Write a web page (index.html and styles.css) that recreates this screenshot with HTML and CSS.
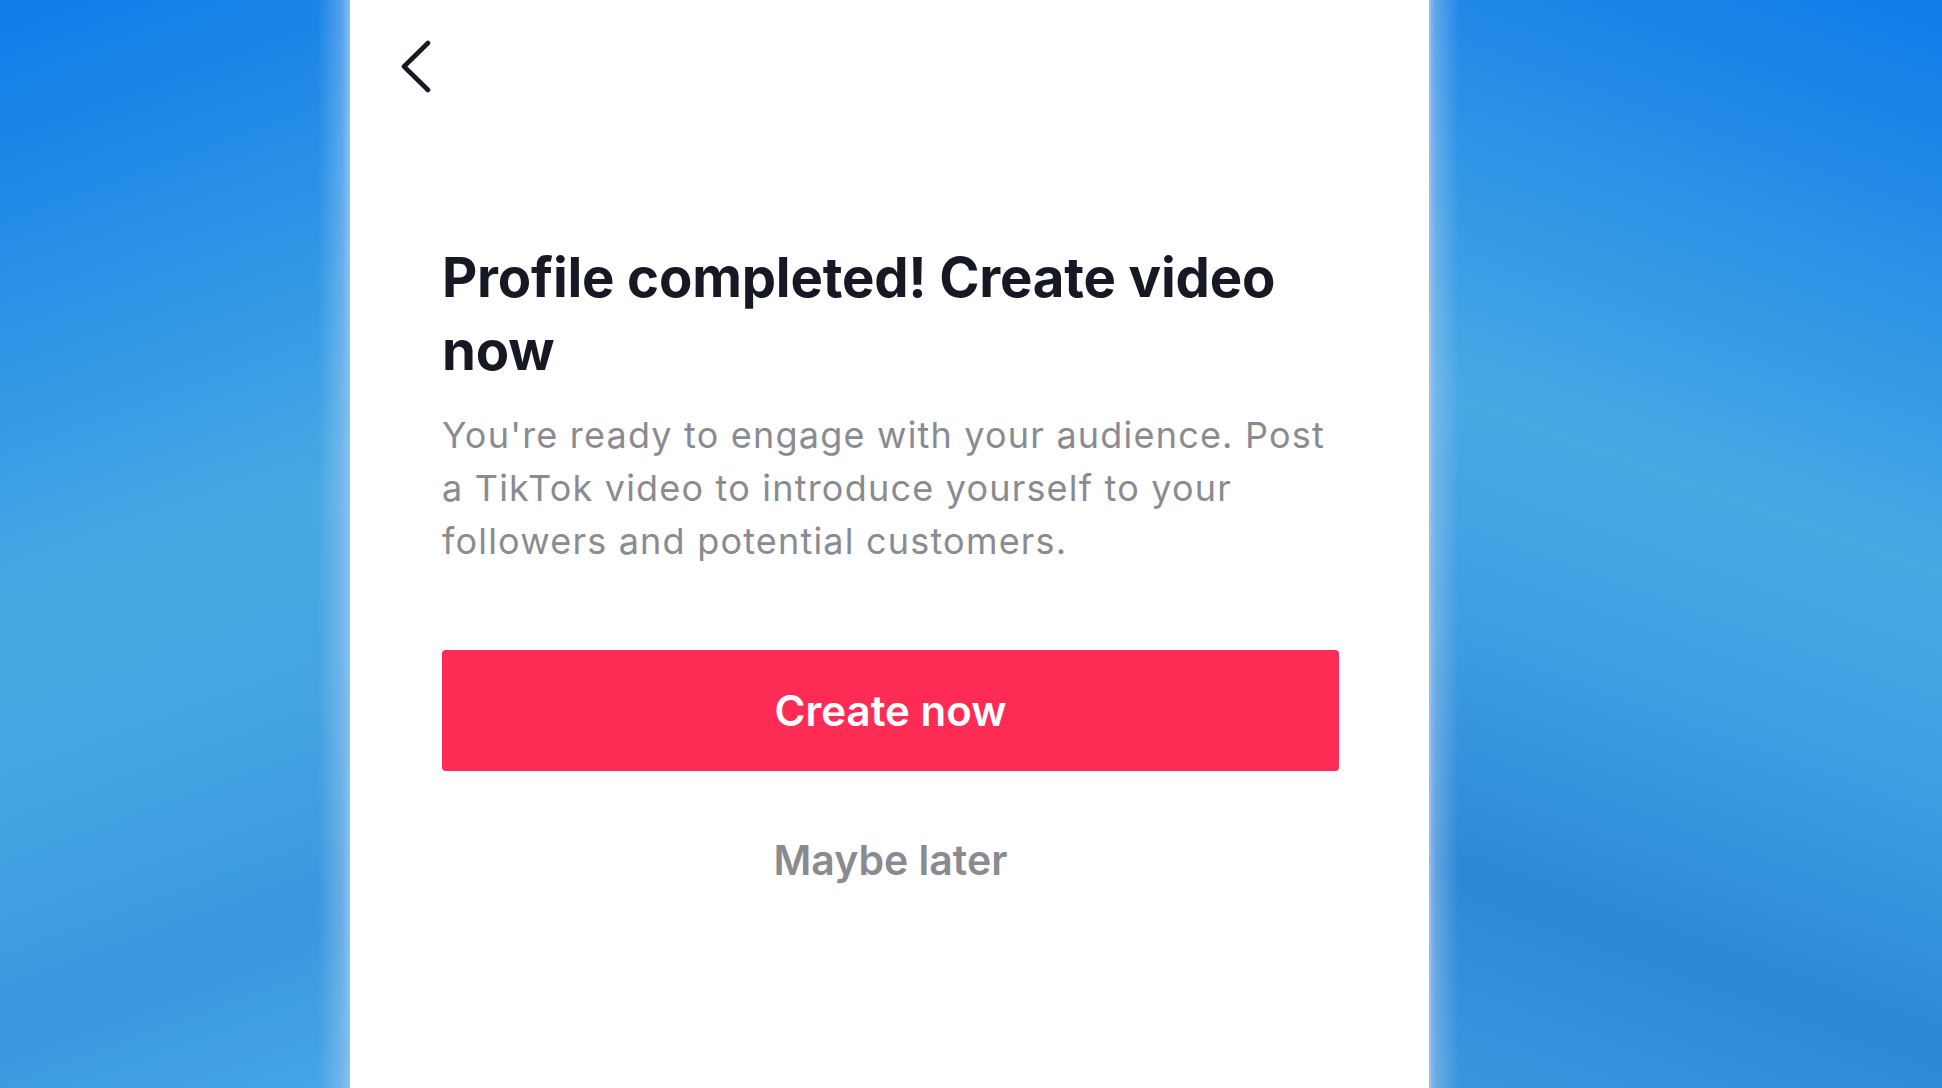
FILE: index.html
```html
<!DOCTYPE html>
<html lang="en">
<head>
<meta charset="utf-8">
<title>Profile completed</title>
<link rel="stylesheet" href="styles.css">
</head>
<body>
<div class="stage">
  <div class="backdrop backdrop-left"></div>
  <main class="panel">
    <div class="topbar">
      <button class="back" aria-label="Back">
        <svg viewBox="0 0 32 54" width="32" height="54" aria-hidden="true">
          <polyline points="27,3 3,26.5 27,50" fill="none" stroke="#161823" stroke-width="4.6" stroke-linecap="round" stroke-linejoin="round"/>
        </svg>
      </button>
    </div>
    <section class="content">
      <h1 class="title">Profile completed! Create video now</h1>
      <p class="desc">You're ready to engage with your audience. Post a TikTok video to introduce yourself to your followers and potential customers.</p>
      <button class="primary">Create now</button>
      <button class="secondary">Maybe later</button>
    </section>
  </main>
  <div class="backdrop backdrop-right"></div>
</div>
</body>
</html>
```
FILE: styles.css
```css
html, body {
  margin: 0;
  padding: 0;
  height: 100%;
}

body {
  font-family: Inter, "Liberation Sans", Arial, sans-serif;
  overflow: hidden;
  background: #3a9be2;
}

.stage {
  display: flex;
  height: 1088px;
  width: 1942px;
}

.backdrop {
  height: 100%;
}

.backdrop-left {
  width: 350px;
  flex: none;
  background:
    linear-gradient(90deg, rgba(255,255,255,0) 0, rgba(255,255,255,0) 318px, rgba(190,215,245,0.35) 342px, rgba(140,195,245,0.9) 349px, rgba(140,195,245,0.9) 350px),
    linear-gradient(160deg, #0f7be8 0%, #2a92e6 25%, #47a9e4 50%, #45a5e3 65%, #3a97de 85%, #46a6e6 100%);
}

.backdrop-right {
  flex: 1;
  background:
    linear-gradient(90deg, rgba(180,205,240,0.8) 0, rgba(170,200,240,0.45) 6px, rgba(255,255,255,0) 30px),
    linear-gradient(200deg, #0f7be8 0%, #2a91e6 22%, #47aae5 45%, #3d9fe2 62%, #2d87d6 82%, #3a97de 100%);
}

.panel {
  width: 1079px;
  flex: none;
  background: #ffffff;
  display: flex;
  flex-direction: column;
}

.topbar {
  height: 140px;
  padding: 40px 0 0 51px;
  box-sizing: border-box;
}

.back {
  border: 0;
  background: none;
  padding: 0;
  margin: 0;
  width: 32px;
  height: 54px;
  display: block;
  cursor: pointer;
}

.back svg {
  display: block;
}

.content {
  padding: 101px 90px 0 92px;
  display: flex;
  flex-direction: column;
}

.title {
  margin: 0;
  font-size: 54.5px;
  line-height: 73px;
  font-weight: 700;
  color: #161823;
  letter-spacing: -0.2px;
  max-width: 880px;
}

.desc {
  margin: 22px 0 0;
  font-size: 36px;
  line-height: 53px;
  font-weight: 400;
  color: #8a8b91;
  letter-spacing: 1.2px;
  max-width: 890px;
}

.primary {
  margin-top: 82px;
  height: 121px;
  width: 897px;
  border: 0;
  border-radius: 4px;
  background: #fe2c55;
  color: #ffffff;
  font-family: inherit;
  font-size: 42px;
  font-weight: 600;
  cursor: pointer;
}

.secondary {
  margin-top: 64px;
  align-self: center;
  border: 0;
  background: none;
  padding: 0;
  font-family: inherit;
  font-size: 41px;
  line-height: 50px;
  font-weight: 600;
  color: #8a8b91;
  cursor: pointer;
  width: 897px;
  text-align: center;
}
```
